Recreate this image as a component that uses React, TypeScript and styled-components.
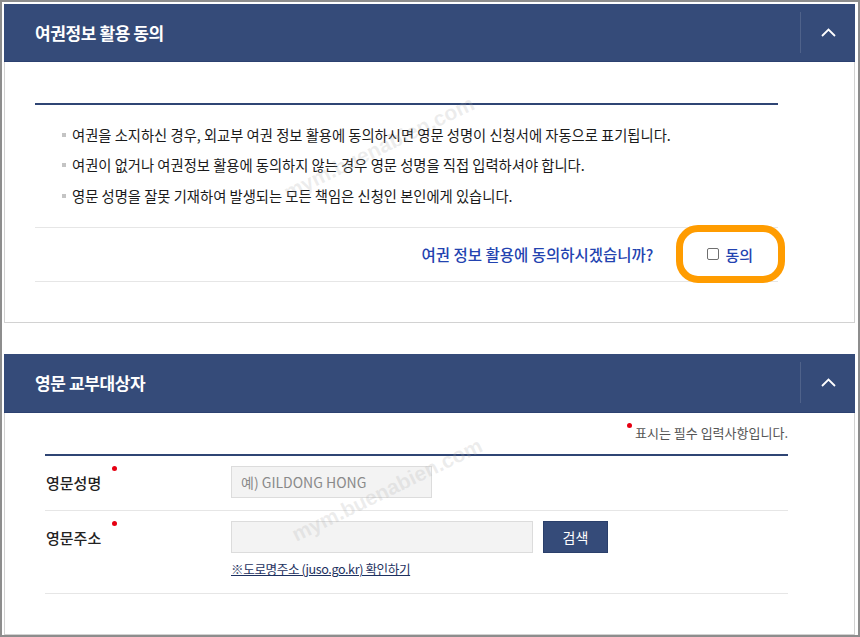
import React from 'react';
import styled, { createGlobalStyle } from 'styled-components';

const GlobalStyle = createGlobalStyle`
  *, *::before, *::after { box-sizing: border-box; }
  body {
    margin: 0;
    background: #fff;
    font-family: 'Noto Sans CJK KR', 'Noto Sans', sans-serif;
    color: #222;
  }
`;

const bullets = [
  '여권을 소지하신 경우, 외교부 여권 정보 활용에 동의하시면 영문 성명이 신청서에 자동으로 표기됩니다.',
  '여권이 없거나 여권정보 활용에 동의하지 않는 경우 영문 성명을 직접 입력하셔야 합니다.',
  '영문 성명을 잘못 기재하여 발생되는 모든 책임은 신청인 본인에게 있습니다.',
];

const ChevronUp: React.FC = () => (
  <svg width="15" height="9" viewBox="0 0 15 9" fill="none">
    <polyline points="1,8 7.5,1.5 14,8" stroke="#fff" strokeWidth="1.8" />
  </svg>
);

const App: React.FC = () => {
  return (
    <>
      <GlobalStyle />
      <Frame>
        <Panel>
          <PanelHeader>
            <PanelTitle>여권정보 활용 동의</PanelTitle>
            <Toggle>
              <ChevronUp />
            </Toggle>
          </PanelHeader>
          <ConsentBody>
            <BlueRule />
            <BulletList>
              {bullets.map((text) => (
                <Bullet key={text}>{text}</Bullet>
              ))}
            </BulletList>
            <QuestionRow>
              <Question>여권 정보 활용에 동의하시겠습니까?</Question>
              <AgreeLabel>
                <CheckBox type="checkbox" />
                동의
              </AgreeLabel>
            </QuestionRow>
          </ConsentBody>
        </Panel>

        <Panel second>
          <PanelHeader tall>
            <PanelTitle>영문 교부대상자</PanelTitle>
            <Toggle>
              <ChevronUp />
            </Toggle>
          </PanelHeader>
          <FormBody>
            <Note>
              <Dot />
              표시는 필수 입력사항입니다.
            </Note>
            <BlueRule />
            <FormRow>
              <Label>
                <LabelText>영문성명</LabelText>
                <Dot />
              </Label>
              <Field>
                <TextInput width={201} placeholder="예) GILDONG HONG" />
              </Field>
            </FormRow>
            <FormRow last>
              <Label>
                <LabelText>영문주소</LabelText>
                <Dot />
              </Label>
              <Field>
                <InputLine>
                  <TextInput width={302} />
                  <SearchButton>검색</SearchButton>
                </InputLine>
                <RoadLink href="#">※도로명주소 (juso.go.kr) 확인하기</RoadLink>
              </Field>
            </FormRow>
          </FormBody>
        </Panel>

        <Watermark style={{ left: 262, top: 134 }}>mym.buenabien.com</Watermark>
        <Watermark style={{ left: 270, top: 476 }}>mym.buenabien.com</Watermark>
      </Frame>
    </>
  );
};

const Frame = styled.div`
  position: relative;
  width: 860px;
  height: 637px;
  border: 2px solid #8d8d8d;
  padding: 2px 3px 1px 2px;
  background: #fff;
  overflow: hidden;
`;

const Panel = styled.section<{ second?: boolean }>`
  border: 1px solid #d2d2d2;
  border-top: none;
  background: #fff;
  margin-top: ${({ second }) => (second ? '31px' : '0')};
`;

const PanelHeader = styled.header<{ tall?: boolean }>`
  display: flex;
  align-items: center;
  justify-content: space-between;
  height: ${({ tall }) => (tall ? '59px' : '58px')};
  margin: 0 -1px;
  background: #354b79;
  border-bottom: 1px solid #2c4170;
`;

const PanelTitle = styled.h2`
  margin: 0;
  padding-left: 31px;
  font-size: 17px;
  font-weight: 700;
  letter-spacing: -0.4px;
  color: #fff;
`;

const Toggle = styled.div`
  display: flex;
  align-items: center;
  justify-content: center;
  width: 55px;
  height: 41px;
  border-left: 1px solid rgba(255, 255, 255, 0.13);
`;

const ConsentBody = styled.div`
  padding: 41px 76px 40px 30px;
`;

const BlueRule = styled.div`
  height: 2px;
  background: #2f4574;
`;

const BulletList = styled.ul`
  list-style: none;
  margin: 0;
  padding: 15px 0 16px;
  border-bottom: 1px solid #e6e6e6;
`;

const Bullet = styled.li`
  position: relative;
  padding-left: 37px;
  font-size: 14.3px;
  line-height: 30.3px;
  color: #1a1a1a;

  &::before {
    content: '';
    position: absolute;
    left: 27px;
    top: 13px;
    width: 4px;
    height: 4px;
    background: #c4c4c4;
  }
`;

const QuestionRow = styled.div`
  display: flex;
  align-items: center;
  justify-content: flex-end;
  height: 54px;
  border-bottom: 1px solid #e6e6e6;
`;

const Question = styled.span`
  font-size: 15.5px;
  font-weight: 500;
  color: #2343b0;
`;

const AgreeLabel = styled.label`
  position: relative;
  display: flex;
  align-items: center;
  gap: 6px;
  margin-left: 54px;
  padding-right: 25px;
  font-size: 15px;
  font-weight: 500;
  color: #2343b0;

  &::after {
    content: '';
    position: absolute;
    left: -31px;
    top: 50%;
    width: 109px;
    height: 58px;
    transform: translateY(-50%);
    border: 7px solid #ff9c00;
    border-radius: 22px;
    pointer-events: none;
  }
`;

const CheckBox = styled.input`
  appearance: none;
  margin: 0;
  width: 12px;
  height: 12px;
  border: 1px solid #6f6f6f;
  border-radius: 2px;
  background: #fff;
`;

const FormBody = styled.div`
  padding: 10px 66px 40px 40px;
`;

const Note = styled.div`
  display: flex;
  justify-content: flex-end;
  align-items: flex-start;
  gap: 3px;
  margin-bottom: 11px;
  font-size: 13px;
  line-height: 20px;
  color: #555;
`;

const Dot = styled.span`
  display: inline-block;
  flex: none;
  width: 5px;
  height: 5px;
  border-radius: 50%;
  background: #e60012;
`;

const FormRow = styled.div<{ last?: boolean }>`
  display: grid;
  grid-template-columns: 186px 1fr;
  padding: 10px 0 ${({ last }) => (last ? '15px' : '11px')};
  border-bottom: 1px solid #e6e6e6;
`;

const Label = styled.div`
  display: flex;
  align-items: flex-start;
  gap: 11px;
  padding-left: 1px;
`;

const LabelText = styled.span`
  font-size: 15px;
  font-weight: 500;
  line-height: 33px;
  color: #222;
`;

const Field = styled.div`
  display: flex;
  flex-direction: column;
  gap: 7px;
`;

const InputLine = styled.div`
  display: flex;
  gap: 10px;
`;

const TextInput = styled.input<{ width: number }>`
  width: ${({ width }) => width}px;
  height: 32px;
  padding: 0 9px;
  border: 1px solid #dcdcdc;
  background: #f3f3f3;
  font-family: 'Noto Sans CJK KR', 'Noto Sans', sans-serif;
  font-size: 14px;
  color: #333;

  &::placeholder {
    color: #8a8a8a;
  }
`;

const SearchButton = styled.button`
  width: 65px;
  height: 32px;
  border: 1px solid #2a3f6b;
  background: #354b79;
  font-family: 'Noto Sans CJK KR', 'Noto Sans', sans-serif;
  font-size: 14px;
  color: #fff;
`;

const RoadLink = styled.a`
  align-self: flex-start;
  font-size: 12.6px;
  line-height: 18px;
  letter-spacing: -0.4px;
  color: #1d3160;
  text-decoration: underline;
`;

const Watermark = styled.div`
  position: absolute;
  width: 230px;
  font-family: 'Liberation Sans', Arial, sans-serif;
  font-size: 21px;
  font-weight: 700;
  color: rgba(170, 170, 170, 0.22);
  text-align: center;
  transform: rotate(-26deg);
  pointer-events: none;
  white-space: nowrap;
`;

export default App;
